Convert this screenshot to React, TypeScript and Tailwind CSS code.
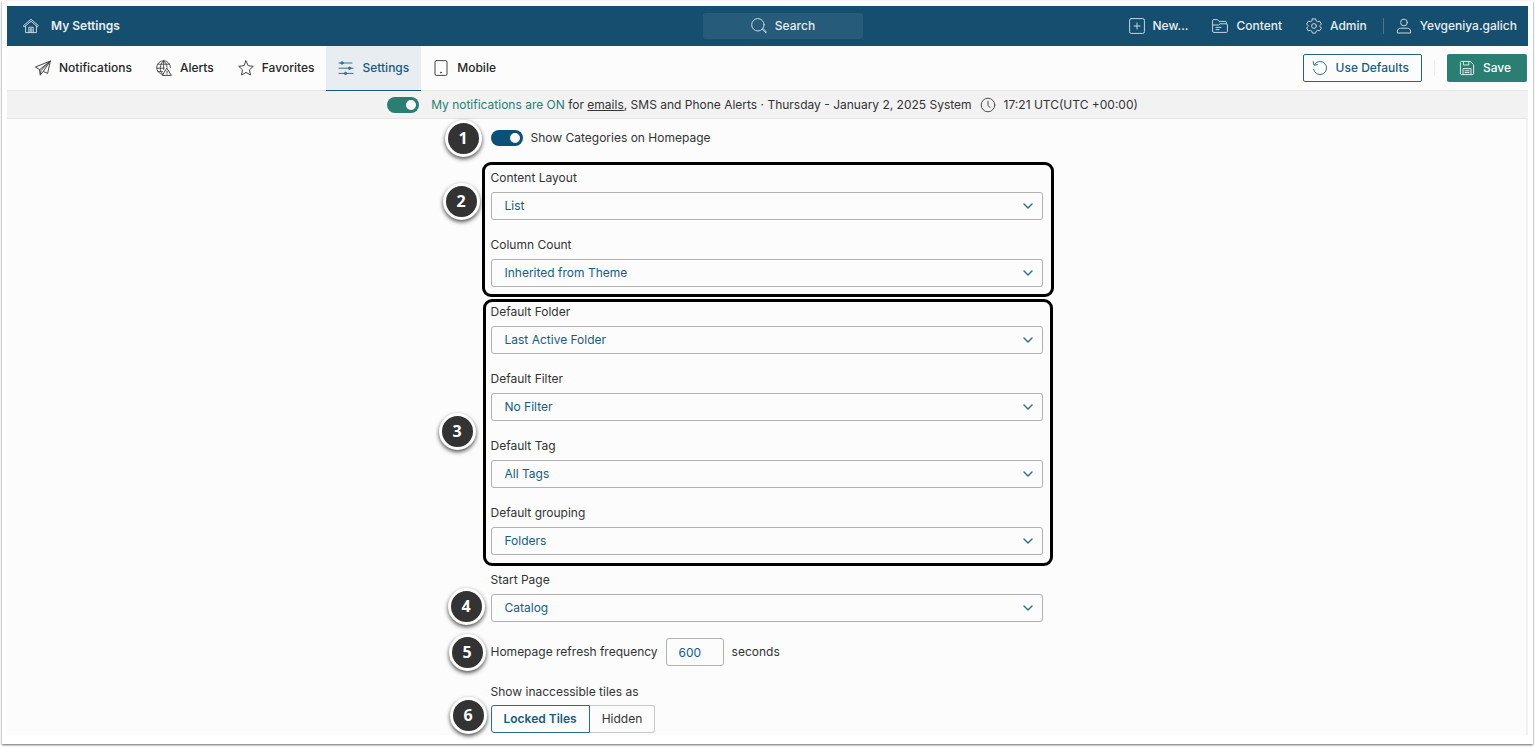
import type { ReactNode } from 'react';
import clsx from 'clsx';

type IconProps = { children: ReactNode; className?: string };

const Icon = ({ children, className }: IconProps) => (
  <svg
    viewBox="0 0 16 16"
    fill="none"
    stroke="currentColor"
    strokeLinecap="round"
    strokeLinejoin="round"
    aria-hidden="true"
    className={clsx('size-4 shrink-0 opacity-85', className)}
  >
    {children}
  </svg>
);

const HomeIcon = () => (
  <Icon>
    <path d="M.6 7.6 8 1.2l7.4 6.4-1 1.1L8 3.2 1.6 8.7z" />
    <path d="M2.6 8v6.6h3.2V9.2h4.4v5.4h3.2V8M7.2 14.4v-3.6h1.6v3.6M5.8 14.6h4.4" />
  </Icon>
);

const SearchIcon = () => (
  <Icon>
    <circle cx="6.9" cy="6.8" r="6.2" />
    <path d="m11.4 11.2 3.4 3.6M12.2 10.6l3.2 3.4-.8.9" />
  </Icon>
);

const NewIcon = () => (
  <Icon>
    <rect x=".6" y=".6" width="14.8" height="14.8" rx="1.6" />
    <path d="M8 5v6M5 8h6" />
  </Icon>
);

const FolderIcon = () => (
  <Icon>
    <path d="M.6 13.4V2.6c0-.6.4-1 1-1h3.8l1.6 1.8h6.4c.6 0 1 .4 1 1v1.4" />
    <path d="M.6 13.4c0 .6.4 1 1 1h12.8c.6 0 1-.4 1-1V6.8c0-.6-.4-1-1-1H8L6.6 7H.8M4 9.4h5M4 11.6h3" />
  </Icon>
);

const GearIcon = () => (
  <Icon>
    <path d="M6.4.9h3.2l.6 2 1.4.8 2.1-.5 1.7 2.8L14 7.5v1l1.4 1.5-1.7 2.8-2.1-.5-1.4.8-.6 2H6.4l-.6-2-1.4-.8-2.1.5L.6 10 2 8.5v-1L.6 6l1.7-2.8 2.1.5 1.4-.8z" />
    <circle cx="8" cy="8" r="2.4" />
  </Icon>
);

const UserIcon = () => (
  <Icon>
    <circle cx="8" cy="4.5" r="3.4" />
    <path d="M1.4 14.6v-1.4c0-1.8 1.4-3 3-3h7.2c1.6 0 3 1.2 3 3v1.4z" />
  </Icon>
);

const PlaneIcon = () => (
  <Icon>
    <path d="M.8 6.9 15.3 1l-2.7 12.4-4.3-2-3 3.6-.8-5.2zM4.5 9.8 15.3 1 6 10.5 5.3 15M15.3 1 8.3 11.4" />
  </Icon>
);

const AlertsIcon = () => (
  <Icon>
    <path
      strokeWidth=".9"
      d="M6.8 14.5a6.9 6.9 0 1 1 7.7-6.8M7.6.8C3.4 4.4 3.4 10.6 6.2 14M7.6.8c2.4 2 3.4 4.4 3.4 6.4M7.6.8v8.6M1.8 4.2h11.8M.8 8.2h7.4M1.8 11.6h4.6"
    />
    <path d="m11 8.4 4.4 7H6.6zM11 11.2v1.6M11 14v.1" />
  </Icon>
);

const StarIcon = () => (
  <Icon>
    <path d="m8 .9 2.2 4.8 5.1.6-3.8 3.5 1 5.2L8 12.4 3.5 15l1-5.2L.7 6.3l5.1-.6z" />
  </Icon>
);

const SlidersIcon = () => (
  <Icon>
    <path d="M1 3h13M1 8.2h14M1 13.4h14" />
    <circle cx="4" cy="3" r="1.2" fill="currentColor" />
    <circle cx="11.6" cy="8.2" r="1.2" fill="currentColor" />
    <circle cx="7.6" cy="13.4" r="1.2" fill="currentColor" />
  </Icon>
);

const MobileIcon = () => (
  <Icon>
    <rect x="2" y=".6" width="12" height="14.8" rx="1.4" />
    <circle cx="8" cy="12.6" r=".5" fill="currentColor" />
  </Icon>
);

const ResetIcon = () => (
  <Icon>
    <path d="M2.3 4.6a6.6 6.6 0 1 1-.8 4.8M1.2 1.6l.7 3.6 3.6-.6" />
  </Icon>
);

const SaveIcon = () => (
  <Icon>
    <path d="M1.4 13.6V2.4c0-.6.4-1 1-1h8.8l3.4 3.2v9c0 .6-.4 1-1 1H2.4c-.6 0-1-.4-1-1z" />
    <path d="M4.4 1.6V5h5.4V1.6M4 14.4V8.6h8v5.8M6 10.8h4M6 12.6h4" />
  </Icon>
);

const ClockIcon = () => (
  <Icon>
    <circle cx="8" cy="8" r="6.8" />
    <path d="M8 4.2v4.2l2 2.2" />
  </Icon>
);

const tabs = [
  { label: 'Notifications', icon: <PlaneIcon /> },
  { label: 'Alerts', icon: <AlertsIcon /> },
  { label: 'Favorites', icon: <StarIcon /> },
  { label: 'Settings', icon: <SlidersIcon />, active: true },
  { label: 'Mobile', icon: <MobileIcon /> },
];

const Step = ({ n, className }: { n: number; className: string }) => (
  <span
    className={clsx(
      'absolute flex size-[37px] items-center justify-center rounded-full border-[3px] border-white bg-[#333] pb-[2px] font-["Open_Sans",sans-serif] text-base leading-5 font-bold text-white shadow-[0_2px_4px_rgba(0,0,0,0.7)]',
      className
    )}
  >
    {n}
  </span>
);

const Toggle = ({ id, label, className }: { id: string; label?: string; className: string }) => (
  <input
    id={id}
    type="checkbox"
    role="switch"
    aria-label={label}
    defaultChecked
    className={clsx(
      'relative h-4 w-8 shrink-0 appearance-none rounded-full bg-gray-400 before:absolute before:top-[3px] before:left-[3px] before:size-[10px] before:rounded-full before:bg-white checked:before:left-[19px]',
      className
    )}
  />
);

const SelectField = ({ id, label, value }: { id: string; label: string; value: string }) => (
  <div className="flex flex-col gap-1">
    <label htmlFor={id} className="leading-5">
      {label}
    </label>
    <div className="relative">
      <select
        id={id}
        defaultValue={value}
        className="block h-7 w-full appearance-none rounded-[3px] border border-[#b0b0b0] bg-[#fcfcfc] px-[13px] pb-px text-[#165c82]"
      >
        <option>{value}</option>
      </select>
      <svg
        viewBox="0 0 10 6"
        fill="none"
        stroke="currentColor"
        strokeWidth="1.4"
        strokeLinecap="round"
        strokeLinejoin="round"
        aria-hidden="true"
        className="pointer-events-none absolute top-[11px] right-[10px] h-[6px] w-[10px] text-[#2a6d90]"
      >
        <path d="m1 1 4 4 4-4" />
      </svg>
    </div>
  </div>
);

const Header = () => (
  <header className="grid h-10 grid-cols-[1fr_auto_1fr] items-center bg-[#154e6e] pr-[11px] pl-4 font-medium text-[#e8eef2]">
    <a href="#" className="flex items-center gap-3 font-semibold">
      <HomeIcon />
      My Settings
    </a>
    <button className="ml-[26px] flex h-[26px] w-40 items-center justify-center gap-2 rounded-[3px] bg-[#265b79]">
      <SearchIcon />
      Search
    </button>
    <nav className="flex items-center justify-end">
      <a href="#" className="mr-6 flex items-center gap-2">
        <NewIcon />
        New...
      </a>
      <a href="#" className="mr-6 flex items-center gap-2">
        <FolderIcon />
        Content
      </a>
      <a href="#" className="flex items-center gap-2">
        <GearIcon />
        Admin
      </a>
      <span className="mr-3 ml-4 h-4 w-px bg-[#4a7690]" />
      <a href="#" className="flex items-center gap-2">
        <UserIcon />
        Yevgeniya.galich
      </a>
    </nav>
  </header>
);

const Toolbar = () => (
  <div className="flex h-[45px] items-stretch justify-between border-b border-[#e6e6e6] bg-[#fcfcfc] pr-px pl-4 font-medium">
    <nav className="-mb-px flex">
      {tabs.map((tab) => (
        <a
          key={tab.label}
          href="#"
          className={clsx(
            'flex items-center gap-2 border-b px-3',
            tab.active
              ? 'border-[#165c82] bg-[#e8edf1] text-[#165c82]'
              : 'border-transparent text-[#262626]'
          )}
        >
          {tab.icon}
          {tab.label}
        </a>
      ))}
    </nav>
    <div className="flex items-center gap-3">
      <button className="flex h-7 items-center gap-2 rounded-[2px] border border-[#1f6488] pr-3 pl-2 text-[#165c82]">
        <ResetIcon />
        Use Defaults
      </button>
      <span className="h-4 w-px bg-[#ebebeb]" />
      <button className="flex h-7 items-center gap-2 rounded-[2px] bg-[#2b7e72] pr-4 pl-3 text-white">
        <SaveIcon />
        Save
      </button>
    </div>
  </div>
);

const StatusBar = () => (
  <div className="flex h-7 items-center justify-center border-r-2 border-b border-[#e4e4e4] border-r-[#f2f2f2] bg-[#f2f2f2] pr-2">
    <Toggle id="notifications-on" label="My notifications" className="mr-3 checked:bg-[#2b7e72]" />
    <p>
      <span className="text-[#2b7e72]">My notifications are ON</span> for{' '}
      <a href="#" className="underline">
        emails
      </a>
      , SMS and Phone Alerts · Thursday - January 2, 2025 System
    </p>
    <span className="ml-2 flex items-center gap-2">
      <ClockIcon />
      17:21 UTC(UTC +00:00)
    </span>
  </div>
);

const SettingsForm = () => (
  <form className="mx-auto w-full max-w-[552px] pt-[9px]">
    <div className="relative flex h-5 items-center gap-2">
      <Step n={1} className="-top-2 -left-[46px]" />
      <Toggle id="show-categories" className="checked:bg-[#0b5077]" />
      <label htmlFor="show-categories">Show Categories on Homepage</label>
    </div>

    <div className="relative -mr-[11px] -ml-[9px] mt-[14px] flex flex-col gap-[15px] rounded-[9px] border-[3px] border-black pt-[3px] pr-2 pb-[7px] pl-[6px]">
      <Step n={2} className="top-[18px] -left-[42px]" />
      <SelectField id="content-layout" label="Content Layout" value="List" />
      <SelectField id="column-count" label="Column Count" value="Inherited from Theme" />
    </div>

    <div className="relative -mr-[10px] -ml-2 mt-[2px] flex flex-col gap-[15px] rounded-[9px] border-[3px] border-black pr-[7px] pb-2 pl-[5px]">
      <Step n={3} className="top-[111px] -left-[47px]" />
      <SelectField id="default-folder" label="Default Folder" value="Last Active Folder" />
      <SelectField id="default-filter" label="Default Filter" value="No Filter" />
      <SelectField id="default-tag" label="Default Tag" value="All Tags" />
      <SelectField id="default-grouping" label="Default grouping" value="Folders" />
    </div>

    <div className="relative mt-1">
      <Step n={4} className="top-[18px] -left-[43px]" />
      <SelectField id="start-page" label="Start Page" value="Catalog" />
    </div>

    <div className="relative mt-4 flex items-center gap-2">
      <Step n={5} className="-top-1 -left-[42px]" />
      <label htmlFor="refresh">Homepage refresh frequency</label>
      <input
        id="refresh"
        type="text"
        defaultValue="600"
        className="h-7 w-[58px] rounded-[3px] border border-[#b0b0b0] bg-[#fcfcfc] px-3 text-[#165c82]"
      />
      <span>seconds</span>
    </div>

    <fieldset className="mt-4">
      <legend className="leading-5">Show inaccessible tiles as</legend>
      <div className="relative mt-[3px] flex">
        <Step n={6} className="-top-2 -left-[41px]" />
        <button
          type="button"
          className="h-7 rounded-l-[3px] border border-[#2a6d90] px-3 font-semibold text-[#165c82]"
        >
          Locked Tiles
        </button>
        <button
          type="button"
          className="h-7 rounded-r-[3px] border border-l-0 border-[#c8c8c8] px-3"
        >
          Hidden
        </button>
      </div>
    </fieldset>
  </form>
);

const App = () => {
  return (
    <div className="flex min-h-screen flex-col bg-white px-[2px] pt-px pb-[3px] font-[Inter,sans-serif] text-xs leading-5 text-[#333]">
      <div className="flex grow flex-col bg-white px-[5px] pt-[5px] pb-[9px] shadow-[0_1px_2px_rgba(0,0,0,0.6)]">
        <Header />
        <Toolbar />
        <StatusBar />
        <main className="grow border-r-2 border-[#f2f2f2] bg-[#fcfcfc]">
          <SettingsForm />
        </main>
      </div>
    </div>
  );
};

export default App;
